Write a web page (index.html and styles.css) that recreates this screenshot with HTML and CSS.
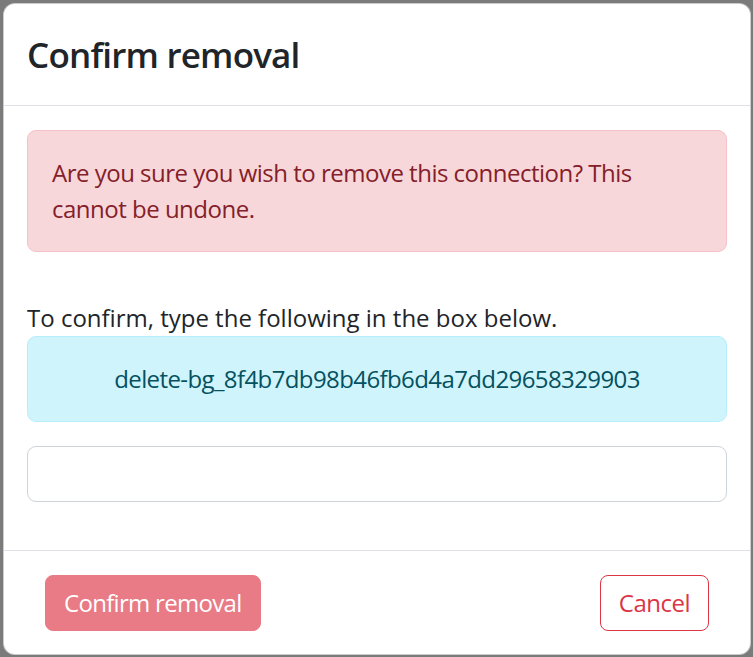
FILE: index.html
```html
<!DOCTYPE html>
<html lang="en">
<head>
<meta charset="utf-8">
<title>Confirm removal</title>
<link rel="stylesheet" href="styles.css">
</head>
<body>
<div class="backdrop">
  <div class="modal">
    <div class="modal-header">
      <h4 class="modal-title">Confirm removal</h4>
    </div>
    <div class="modal-body">
      <div class="alert alert-danger">Are you sure you wish to remove this connection? This cannot be undone.</div>
      <p class="confirm-label">To confirm, type the following in the box below.</p>
      <div class="alert alert-info">delete-bg_8f4b7db98b46fb6d4a7dd29658329903</div>
      <input class="form-control" type="text" aria-label="Confirmation text">
    </div>
    <div class="modal-footer">
      <button class="btn btn-danger" disabled>Confirm removal</button>
      <button class="btn btn-outline-danger">Cancel</button>
    </div>
  </div>
</div>
</body>
</html>
```

FILE: styles.css
```css
* { box-sizing: border-box; }
html, body { margin: 0; padding: 0; }
body {
  background: #7b7b7b;
  font-family: "Open Sans", "Noto Sans", sans-serif;
  color: #212529;
  font-size: 24px;
  line-height: 36px;
}
.backdrop {
  padding: 3px 2px 2px 3px;
  height: 657px;
}
.modal {
  width: 748px;
  height: 652px;
  background: #fff;
  border: 1px solid rgba(0,0,0,0.2);
  border-radius: 12px;
  display: flex;
  flex-direction: column;
  overflow: hidden;
}
.modal-header {
  padding: 25px 23px 24px;
  border-bottom: 1px solid #dee2e6;
}
.modal-title {
  margin: 0;
  font-size: 35px;
  line-height: 52px;
  font-weight: 600;
  letter-spacing: -0.8px;
  color: #212529;
}
.modal-body {
  padding: 24px 23px;
}
.alert {
  border: 1px solid transparent;
  border-radius: 9px;
  padding: 24px;
}
.alert-danger {
  background: #f8d7da;
  border-color: #f5c2c7;
  color: #842029;
  margin-bottom: 48px;
  letter-spacing: -0.5px;
}
.confirm-label {
  margin: 0;
}
.alert-info {
  background: #cff4fc;
  border-color: #b6effb;
  color: #055160;
  text-align: center;
  margin-bottom: 24px;
  letter-spacing: -0.6px;
}
.form-control {
  display: block;
  width: 100%;
  height: 56px;
  margin: 0 0 24px;
  border: 1px solid #ced4da;
  border-radius: 9px;
  background: #fff;
  font: inherit;
  padding: 9px 18px;
}
.modal-footer {
  border-top: 1px solid #dee2e6;
  padding: 24px 41px 22px;
  display: flex;
  justify-content: space-between;
  align-items: center;
}
.btn {
  font: inherit;
  font-size: 24px;
  line-height: 36px;
  padding: 9px 18px;
  border: 1px solid transparent;
  border-radius: 8px;
  background: #fff;
}
.btn-danger {
  background: #dc3545;
  border-color: #dc3545;
  color: #fff;
  opacity: 0.65;
  letter-spacing: -0.7px;
}
.btn-outline-danger {
  border-color: #dc3545;
  color: #dc3545;
  letter-spacing: -0.5px;
}
```
